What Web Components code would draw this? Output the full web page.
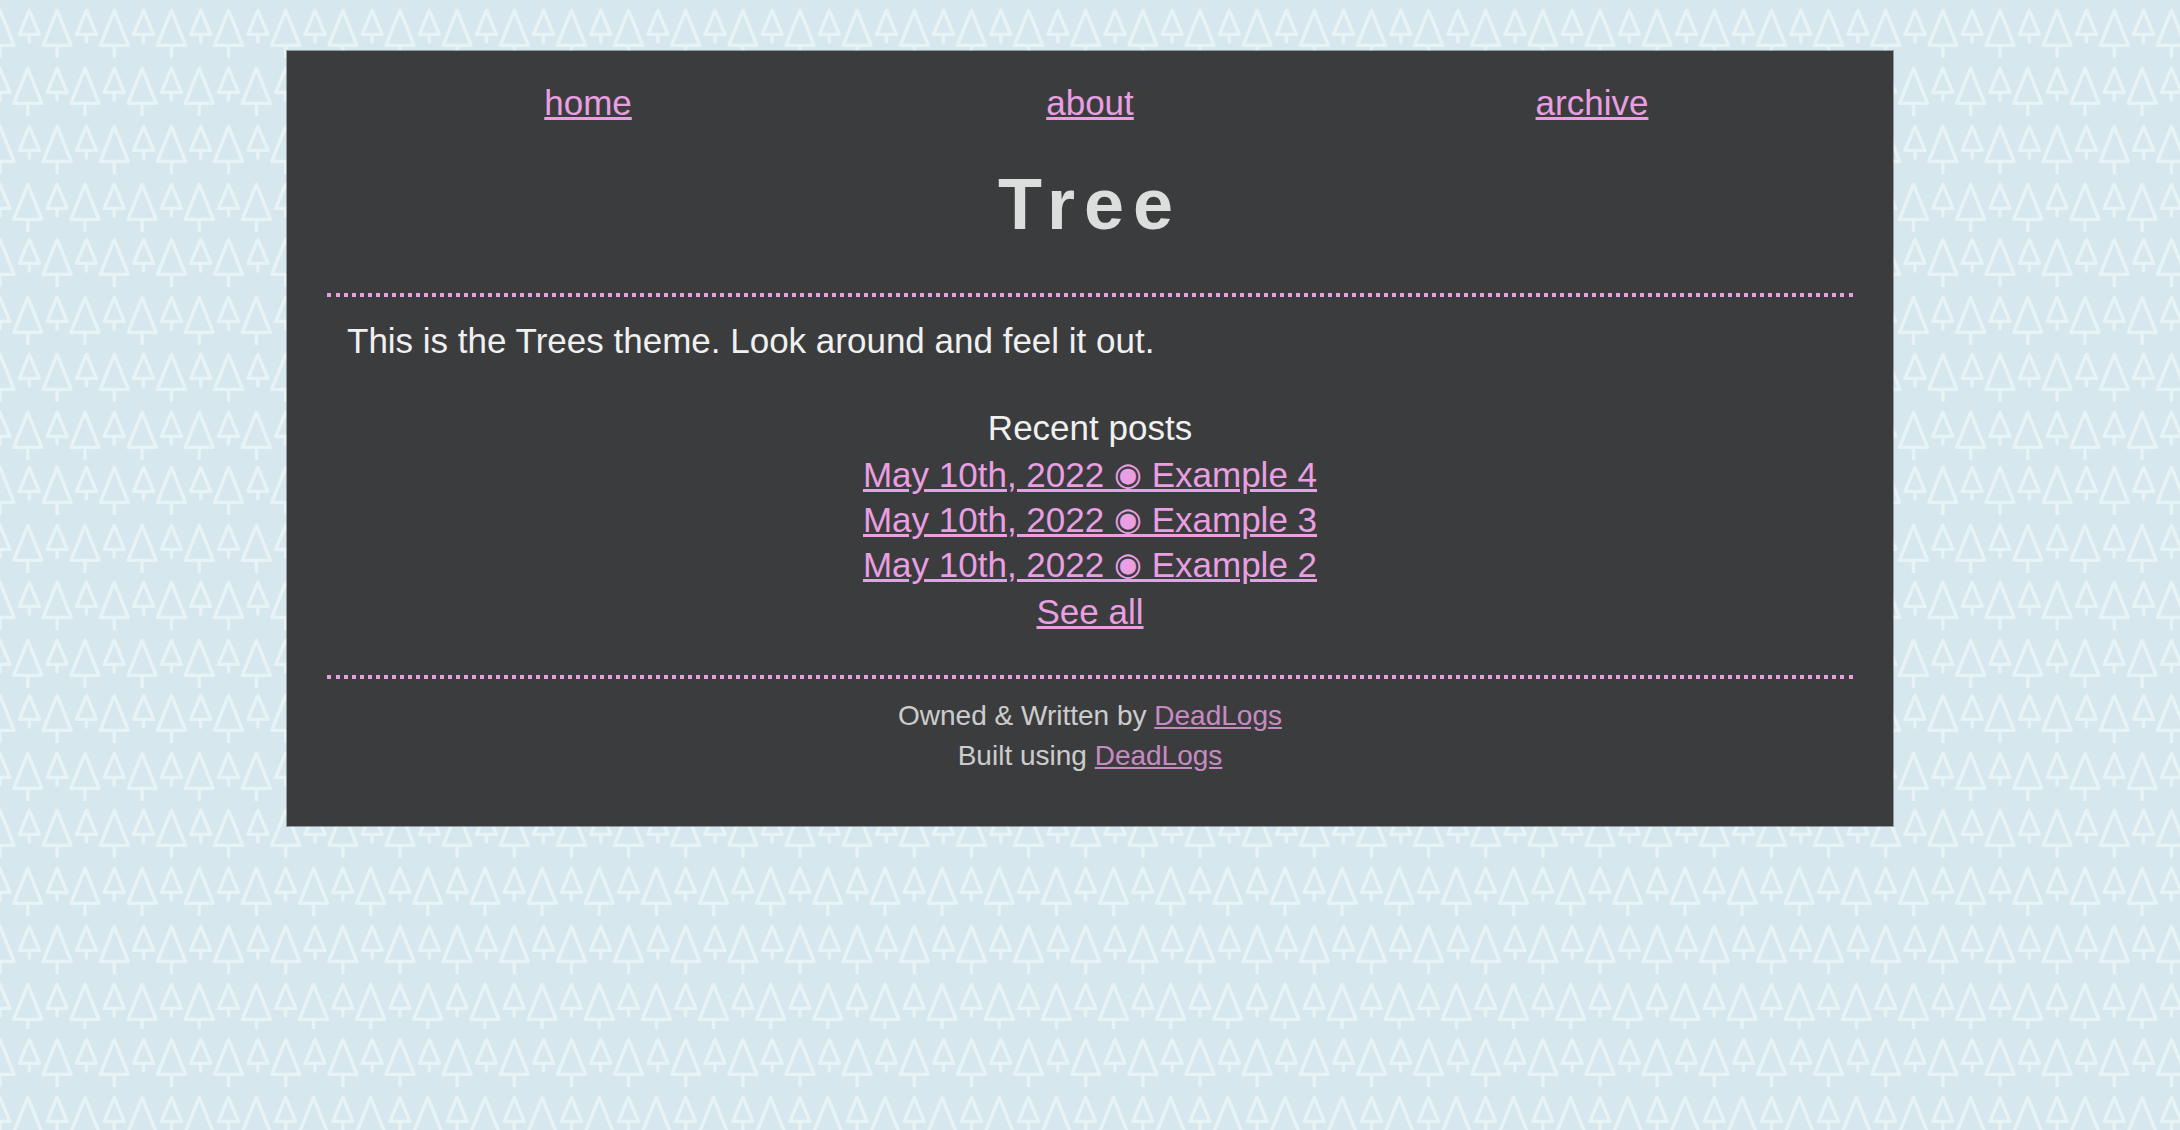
<!DOCTYPE html>
<html lang="en">
<head>
<meta charset="utf-8">
<title>Tree</title>
<style>
  body { margin: 0; font: 35px/45px "Liberation Sans", Arial, sans-serif; }
</style>
</head>
<body>
<tree-page>
  <site-nav slot="nav"></site-nav>
  <site-title>Tree</site-title>
  <dotted-rule></dotted-rule>
  <page-intro>This is the Trees theme. Look around and feel it out.</page-intro>
  <recent-posts>Recent posts</recent-posts>
  <dotted-rule></dotted-rule>
  <site-footer></site-footer>
</tree-page>
<script>
const define = (name, html, setup) => {
  const template = document.createElement('template');
  template.innerHTML = html;
  customElements.define(name, class extends HTMLElement {
    constructor() {
      super();
      this.attachShadow({ mode: 'open' }).append(template.content.cloneNode(true));
      if (setup) setup(this);
    }
  });
};

const LINK = 'a { color: #e99fe1; text-decoration: underline; }';

/* Forest tile: seven tree pairs across, nine double rows down. */
const forest = () => {
  const big = (x, y) => `M${x} ${y - 35}l14 35h-28zM${x} ${y}v12.5`;
  const small = (x, y) => `M${x} ${y - 35}l10 24h-20zM${x} ${y - 11}v9`;
  let d = '';
  for (const top of [0, 116, 229, 344, 457, 572, 685, 800, 916]) {
    const y = top + 45.4;
    for (let i = -1; i <= 7; i++) {
      const x = i * 400 / 7;
      d += big(x, y) + small(x + 29.3, y) + big(x + 27.8, y + 58) + small(x + 57.1, y + 58);
    }
  }
  const svg = `<svg xmlns="http://www.w3.org/2000/svg" width="400" height="1029"><path d="${d}" fill="none" stroke="#e8f3f5" stroke-width="3.4" stroke-linejoin="round"/></svg>`;
  return `url("data:image/svg+xml,${encodeURIComponent(svg)}")`;
};

define('tree-page', `
  <style>
    :host { display: block; box-sizing: border-box; min-height: 100vh; padding: 50px 24px; background-color: #d6e7ed; }
    main { box-sizing: border-box; max-width: 1608px; margin: 0 auto; padding: 29px 40px 50px;
      color: #f0f0f0; background: rgba(54, 54, 55, 0.97); background-clip: padding-box;
      border: 1px solid rgba(100, 104, 106, 0.6); }
  </style>
  <main><slot name="nav"></slot><slot></slot></main>`,
  el => { el.style.backgroundImage = forest(); });

define('site-nav', `
  <style>
    :host { display: block; }
    nav { display: grid; grid-template-columns: repeat(3, 1fr); padding: 0 10px; text-align: center; }
    ${LINK}
  </style>
  <nav><div><a href="#home">home</a></div><div><a href="#about">about</a></div><div><a href="#archive">archive</a></div></nav>`);

define('site-title', `
  <style>
    :host { display: block; margin: 34px 0 43px; text-align: center; }
    h1 { margin: 0; font-size: 72px; line-height: 91px; letter-spacing: 9px; color: #dcdedd; }
  </style>
  <h1><slot></slot></h1>`);

define('dotted-rule', `
  <style>
    :host { display: block; }
    hr { box-sizing: border-box; height: 4px; margin: 0; border: 0; padding: 0 9px;
      background:
        linear-gradient(#e99fe1, #e99fe1) left / 4px 4px no-repeat border-box,
        linear-gradient(#e99fe1, #e99fe1) right / 4px 4px no-repeat border-box,
        repeating-linear-gradient(90deg, #e99fe1 0 4px, transparent 4px 8px) content-box; }
  </style>
  <hr>`);

define('page-intro', `
  <style>
    :host { display: block; padding: 21px 20px 42px; }
    p { margin: 0; }
  </style>
  <p><slot></slot></p>`);

define('recent-posts', `
  <style>
    :host { display: block; padding-bottom: 41px; text-align: center; }
    h2 { margin: 0; font: inherit; }
    ul { list-style: none; margin: 2px 0; padding: 0; }
    li { height: 45px; }
    .dot { font-size: 32px; line-height: 0; vertical-align: 2px; }
    ${LINK}
  </style>
  <h2><slot></slot></h2>
  <ul>
    <li><a href="#example-4">May 10th, 2022 <span class="dot">◉</span> Example 4</a></li>
    <li><a href="#example-3">May 10th, 2022 <span class="dot">◉</span> Example 3</a></li>
    <li><a href="#example-2">May 10th, 2022 <span class="dot">◉</span> Example 2</a></li>
  </ul>
  <div><a href="#archive">See all</a></div>`);

define('site-footer', `
  <style>
    :host { display: block; padding-top: 17px; text-align: center; font-size: 28px; line-height: 40px; opacity: 0.8; }
    p { margin: 0; }
    ${LINK}
  </style>
  <footer>
    <p>Owned &amp; Written by <a href="#owner">DeadLogs</a></p>
    <p>Built using <a href="#deadlogs">DeadLogs</a></p>
  </footer>`);
</script>
</body>
</html>
